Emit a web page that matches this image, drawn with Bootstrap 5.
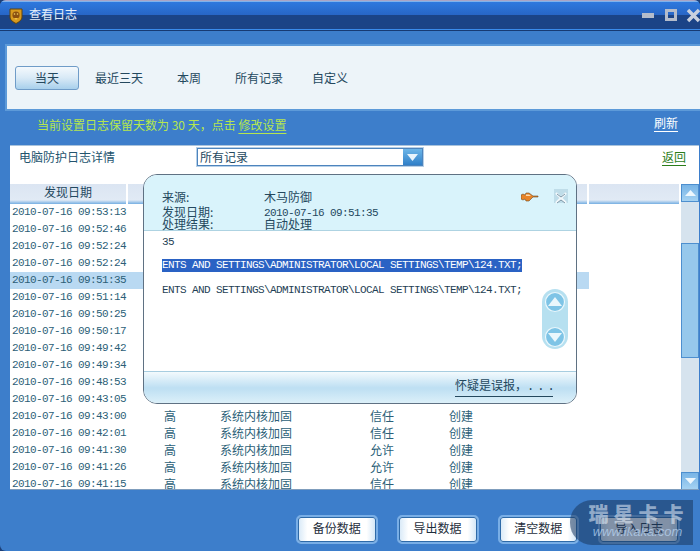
<!DOCTYPE html>
<html lang="zh"><head><meta charset="utf-8"><title>查看日志</title>
<link href="https://cdn.jsdelivr.net/npm/bootstrap@5.3.0/dist/css/bootstrap.min.css" rel="stylesheet">
<style>
html,body{margin:0;height:551px;overflow:hidden;background:#1c3f78}
body{font:12px/1.2 "Noto Sans CJK SC","Liberation Sans",sans-serif;color:#24546e}
.win{position:relative;width:700px;height:551px;background:#3d7ecb;border-radius:6px 6px 0 6px;overflow:hidden}
.titlebar{height:31px;padding-left:9px;border-top:1px solid #a9a4c4;border-bottom:1px solid #173a72;box-shadow:inset 0 1px 0 #7fb2ec,inset 0 -1px 0 #3b8ceb;background:linear-gradient(#2e7ae0,#2766c6 14px,#1b4487 14px,#1b4487);color:#e4eef9;font-size:12px}
.ttl{font-size:12px;margin-left:6px;margin-top:-3px}
.tabs{margin:13px 0 0 5px;height:67px;padding-left:8px;background:#edf4f9;border:2px solid #5d9ad9;border-right:0}
.tabbtn{--bs-btn-padding-x:0;--bs-btn-padding-y:0;--bs-btn-font-size:12px;--bs-btn-color:#24485e;--bs-btn-border-width:0;height:24px;border-radius:3px;color:#24485e}
.tabbtn.on{width:64px;background:linear-gradient(#f4f9fd,#d8e9f6 50%,#a8d0ec);border:1px solid #6f9cc8;margin-right:16px}
.t1{width:48px;margin-right:34px}.t2{width:24px;margin-right:34px}.t3{width:48px;margin-right:29px}.t4{width:36px}
.notice{height:34px;padding:0 22px 6px 37px;color:#b5e64e}
.notice u{text-underline-offset:3px}
.refresh{color:#fff;text-decoration:underline;text-underline-offset:3px;margin-top:-3px}
.panel{position:relative;margin:0 1px 0 10px;height:345px;background:#fff;border-top:1px solid #a9c3dc;border-bottom:1px solid #7f9dbd;overflow:hidden}
.panelhead{height:38px;padding:2px 9px 0 9px}
.lbl{margin-top:2px}
.sel{width:226px;height:18px;margin-left:82px;background:#fff;border:1px solid #4d84bd;box-shadow:0 0 0 1px #b6d0e8;color:#24485e;padding-left:2px}
.selbtn{width:19px;height:16px;background:linear-gradient(#6db6e8,#2f7fc8)}
.back{color:#2b7d1a;text-decoration:underline;text-underline-offset:3px;margin:2px 4px 0 auto}
.gridwrap{height:306px;overflow:hidden}
.logtbl{table-layout:fixed;width:671px;margin:0;--bs-table-bg:transparent;border-collapse:separate;border-spacing:0}
.logtbl th{height:20px;padding:0 0 5px;font-weight:400;text-align:center;color:#24485e;background:linear-gradient(#dbe5f2,#e1eaf5 80%,#74aee2);border-right:2px solid #fff;border-bottom:0;line-height:14px}
.logtbl td{height:17px;padding:0 0 2px;border:0;color:#2c5f78;white-space:nowrap;line-height:15px;font-size:12px}
.logtbl td.dt{font:11px/17px "Liberation Mono",monospace;letter-spacing:-.6px;padding:0 0 0 2px}
.logtbl td.lv{padding-left:36px}
.logtbl tr.cur td{background:#b9d9f2}
.logtbl tr.cur td:last-child{background:none}
.sb{width:18px;background:#d6e3ee;height:306px;position:absolute;right:0;top:38px}
.sbtn{height:18px;background:linear-gradient(#78b4e6,#a5d2f2);border:1px solid #4d8fcf}
.thumb{height:115px;margin-top:41px;background:#96c8ec;border:1px solid #4d8fcf}
.foot{height:61px;padding:25px 20px 0 296px;gap:19px}
.foot .bk{width:82px;height:29px;--bs-btn-padding-x:0;--bs-btn-padding-y:0;--bs-btn-font-size:12px;border:2px solid #79aee6;border-radius:5px;padding:0 0 3px;color:#1e2e3c;background:linear-gradient(90deg,#d6e8f7,#fff 12%,#fff 88%,#cfe4f6);box-shadow:inset 0 0 0 1px #2e6aa8}
.wmark{position:absolute;left:570px;top:500px;width:123px;height:45px;border-radius:22px 0 0 22px;background:rgba(25,55,95,.55);color:rgba(235,243,252,.55);text-align:center;padding-top:3px}
.wmark b{display:block;font-size:20px;font-weight:900;line-height:22px;letter-spacing:5px;padding-left:14px;white-space:nowrap}
.wmark i{display:block;font:italic 13px/13px "Liberation Sans",sans-serif;padding-left:12px;color:rgba(190,218,248,.7)}
.dlg{position:absolute;left:143px;top:174px;width:434px;height:230px;background:#fff;border:1px solid #5f7183;border-radius:14px 12px 12px 14px;overflow:hidden}
.dlghd{position:relative;height:56px;background:#d9f3fb;border-bottom:1px solid #aed3e2;padding:14px 18px 0;color:#24485e}
.hdrow{line-height:12px;height:12px}
.hdrow.first{margin-top:2px}
.hdrow.gap{margin-top:3px}
.hdrow .k{width:102px}
.hdrow .mono{font:11px/14px "Liberation Mono",monospace;letter-spacing:-.6px}
.dlgbd{height:141px;padding:5px 18px 0;font:11px/13px "Liberation Mono",monospace;letter-spacing:-.6px;color:#1f3f55;position:relative}
.ln{height:13px;white-space:nowrap}
.ln.hit{background:#2a62c4;color:#fff;width:360px}
.s1{height:10px}.s2{height:12px}
.dlgft{height:32px;background:linear-gradient(#f3fafd,#bfe0f3 50%,#bfe0f3 55%,#dcf0f9);border-top:1px solid #a7cde0;padding:6px 23px 0 0;color:#24485e}
.dlgft span{border-bottom:1px solid #24485e;padding:0 0 2px;width:98px;display:block;white-space:nowrap;line-height:13px}
.dots{letter-spacing:3px;font-family:"Liberation Mono",monospace}
.pin{position:absolute;left:377px;top:17px}
.cls{position:absolute;left:410px;top:14px;width:14px;height:14px;background:#bfdde9}
.pill{position:absolute;left:398px;top:58px;width:26px;height:60px;border-radius:13px;background:#b6e0f0}
</style></head><body>
<div class="win d-flex flex-column">
  <div class="titlebar d-flex align-items-center">
    <svg width="14" height="16" viewBox="0 0 14 16"><path d="M1 1h12v8c0 3-3 5-6 6.500C4 14 1 12 1 9z" fill="#d79a1e" stroke="#5e4310"/><circle cx="7" cy="7" r="3.600" fill="#8a4f10"/><circle cx="5.500" cy="6" r=".8" fill="#f4d66a"/><circle cx="8.500" cy="6" r=".8" fill="#f4d66a"/><path d="M5 10h4l-2 2z" fill="#f0c040"/></svg>
    <div class="ttl flex-grow-1">查看日志</div>
    <svg width="61" height="16" viewBox="0 0 61 16"><rect x="3" y="5" width="12" height="5" fill="#b4bccb"/><rect x="27.500" y="2.500" width="9" height="9" fill="none" stroke="#b4bccb" stroke-width="3"/><path d="M49 2l11 11M60 2L49 13" stroke="#c9d1de" stroke-width="3.500"/></svg>
  </div>
  <div class="tabs d-flex align-items-center">
    <button class="btn tabbtn on">当天</button>
    <button class="btn tabbtn t1">最近三天</button>
    <button class="btn tabbtn t2">本周</button>
    <button class="btn tabbtn t3">所有记录</button>
    <button class="btn tabbtn t4">自定义</button>
  </div>
  <div class="notice d-flex align-items-center justify-content-between">
    <div>当前设置日志保留天数为 30 天，点击 <u>修改设置</u></div>
    <div class="refresh">刷新</div>
  </div>
  <div class="panel">
    <div class="panelhead d-flex">
      <div class="lbl">电脑防护日志详情</div>
      <div class="sel d-flex justify-content-between align-items-center">所有记录
        <div class="selbtn d-flex justify-content-center align-items-center"><svg width="11" height="7" viewBox="0 0 11 7"><path d="M0 0h11L5.500 7z" fill="#e8f4fc"/></svg></div>
      </div>
      <div class="back">返回</div>
    </div>
    <div class="gridwrap">
      <table class="table logtbl">
        <colgroup><col style="width:118px"><col style="width:92px"><col style="width:150px"><col style="width:79px"><col style="width:140px"><col></colgroup>
        <thead><tr><th>发现日期</th><th></th><th></th><th></th><th></th><th></th></tr></thead>
        <tbody>
          <tr><td class="dt">2010-07-16 09:53:13</td><td></td><td></td><td></td><td></td><td></td></tr>
          <tr><td class="dt">2010-07-16 09:52:46</td><td></td><td></td><td></td><td></td><td></td></tr>
          <tr><td class="dt">2010-07-16 09:52:24</td><td></td><td></td><td></td><td></td><td></td></tr>
          <tr><td class="dt">2010-07-16 09:52:24</td><td></td><td></td><td></td><td></td><td></td></tr>
          <tr class="cur"><td class="dt">2010-07-16 09:51:35</td><td></td><td></td><td></td><td></td><td></td></tr>
          <tr><td class="dt">2010-07-16 09:51:14</td><td></td><td></td><td></td><td></td><td></td></tr>
          <tr><td class="dt">2010-07-16 09:50:25</td><td></td><td></td><td></td><td></td><td></td></tr>
          <tr><td class="dt">2010-07-16 09:50:17</td><td></td><td></td><td></td><td></td><td></td></tr>
          <tr><td class="dt">2010-07-16 09:49:42</td><td></td><td></td><td></td><td></td><td></td></tr>
          <tr><td class="dt">2010-07-16 09:49:34</td><td></td><td></td><td></td><td></td><td></td></tr>
          <tr><td class="dt">2010-07-16 09:48:53</td><td></td><td></td><td></td><td></td><td></td></tr>
          <tr><td class="dt">2010-07-16 09:43:05</td><td></td><td></td><td></td><td></td><td></td></tr>
          <tr><td class="dt">2010-07-16 09:43:00</td><td class="lv">高</td><td>系统内核加固</td><td>信任</td><td>创建</td><td></td></tr>
          <tr><td class="dt">2010-07-16 09:42:01</td><td class="lv">高</td><td>系统内核加固</td><td>信任</td><td>创建</td><td></td></tr>
          <tr><td class="dt">2010-07-16 09:41:30</td><td class="lv">高</td><td>系统内核加固</td><td>允许</td><td>创建</td><td></td></tr>
          <tr><td class="dt">2010-07-16 09:41:26</td><td class="lv">高</td><td>系统内核加固</td><td>允许</td><td>创建</td><td></td></tr>
          <tr><td class="dt">2010-07-16 09:41:15</td><td class="lv">高</td><td>系统内核加固</td><td>信任</td><td>创建</td><td></td></tr>
        </tbody>
      </table>
    </div>
    <div class="sb d-flex flex-column">
      <div class="sbtn d-flex justify-content-center align-items-center"><svg width="11" height="6" viewBox="0 0 11 6"><path d="M0 6h11L5.500 0z" fill="#eef7fd"/></svg></div>
      <div class="thumb"></div>
      <div class="sbtn mt-auto d-flex justify-content-center align-items-center"><svg width="11" height="6" viewBox="0 0 11 6"><path d="M0 0h11L5.500 6z" fill="#eef7fd"/></svg></div>
    </div>
  </div>
  <div class="foot d-flex">
    <button class="btn bk">备份数据</button>
    <button class="btn bk">导出数据</button>
    <button class="btn bk">清空数据</button>
    <button class="btn bk">导入日志</button>
  </div>
  <div class="dlg d-flex flex-column">
    <div class="dlghd">
      <div class="hdrow first d-flex"><div class="k">来源:</div><div>木马防御</div></div>
      <div class="hdrow gap d-flex"><div class="k">发现日期:</div><div class="mono">2010-07-16 09:51:35</div></div>
      <div class="hdrow d-flex"><div class="k">处理结果:</div><div>自动处理</div></div>
      <svg class="pin" width="18" height="10" viewBox="0 0 18 10"><path d="M0 3l2-1 2 1 1-2h3l4 3h5v1h-5L8 9H5L4 7 2 8 0 7z" fill="#e88428" stroke="#6e4a20" stroke-width=".6"/><path d="M5 2.500h3l2 1.500H5z" fill="#fcdcb0"/></svg>
      <div class="cls"><svg width="14" height="14" viewBox="0 0 14 14"><path d="M2 2l10 10M12 2L2 12" stroke="#f2f8fb" stroke-width="2.400"/><path d="M3 3l4 3 4-3M3 12l4-3 4 3" stroke="#7e98a8" fill="none"/></svg></div>
    </div>
    <div class="dlgbd">
      <div class="ln">35</div>
      <div class="ln s1"></div>
      <div class="ln hit">ENTS AND SETTINGS\ADMINISTRATOR\LOCAL SETTINGS\TEMP\124.TXT;</div>
      <div class="ln s2"></div>
      <div class="ln">ENTS AND SETTINGS\ADMINISTRATOR\LOCAL SETTINGS\TEMP\124.TXT;</div>
      <div class="pill">
        <svg width="26" height="60" viewBox="0 0 26 60"><circle cx="13" cy="13" r="9.500" fill="#7ec4e6" stroke="#eaf7fc" stroke-width="1.200"/><path d="M6 17h14L13 8z" fill="#eaf7fc"/><circle cx="13" cy="48" r="9.500" fill="#7ec4e6" stroke="#eaf7fc" stroke-width="1.200"/><path d="M6 44h14L13 53z" fill="#eaf7fc"/></svg>
      </div>
    </div>
    <div class="dlgft d-flex justify-content-end align-items-start"><span>怀疑是误报，<span class="d-inline border-0 p-0 dots">...</span></span></div>
  </div>
  <div class="wmark"><b>瑞星卡卡</b><i>www.ikaka.com</i></div>
</div>
<script src="https://cdn.jsdelivr.net/npm/bootstrap@5.3.0/dist/js/bootstrap.bundle.min.js"></script>
</body></html>
